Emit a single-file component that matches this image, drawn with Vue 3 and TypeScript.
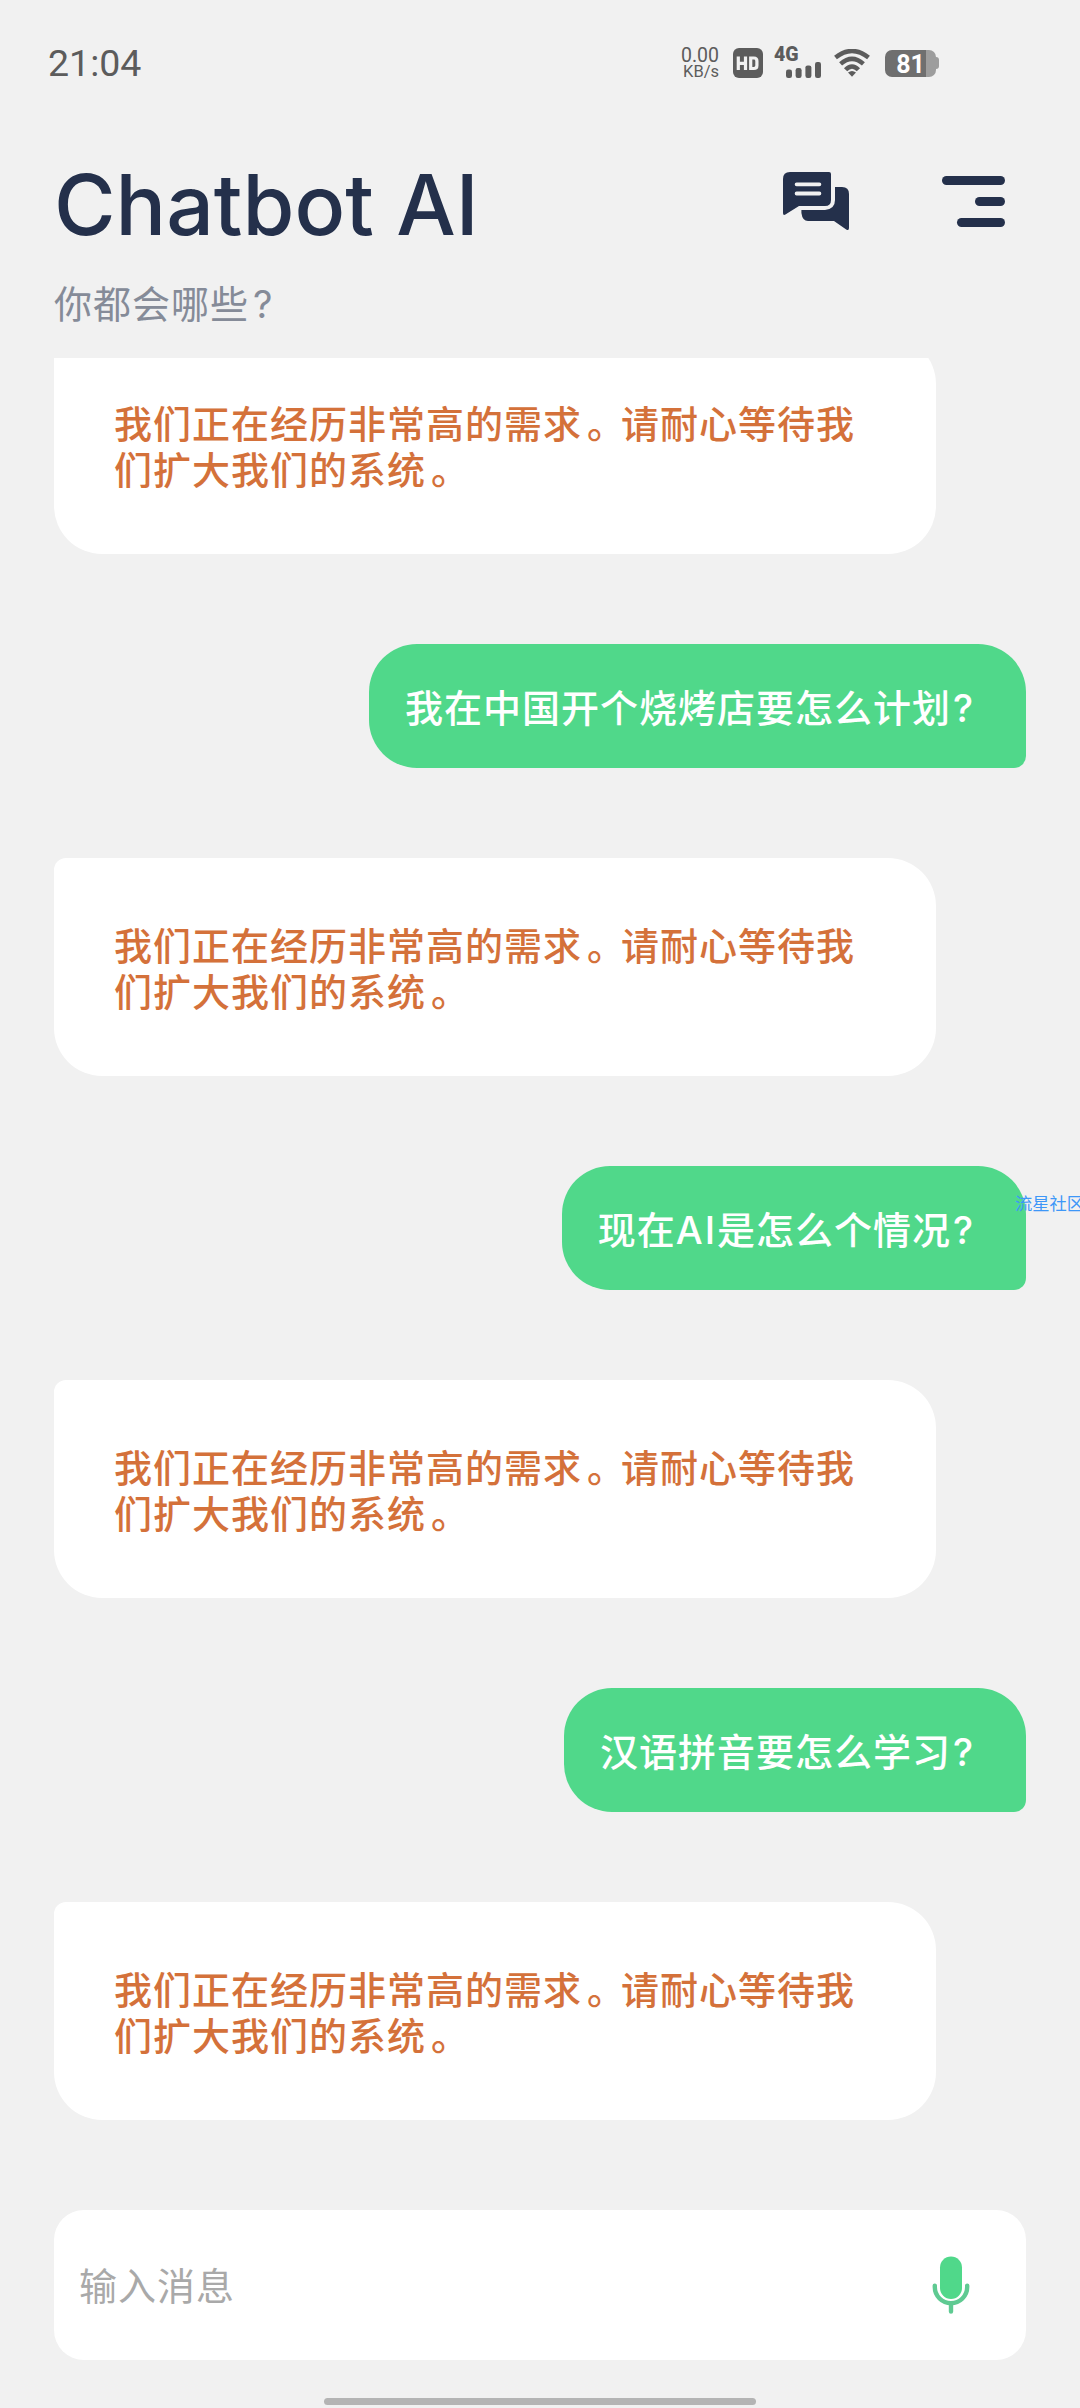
<script setup lang="ts">
interface Message {
  id: number
  from: 'bot' | 'user'
  text: string
}

const busy = '我们正在经历非常高的需求。请耐心等待我们扩大我们的系统。'

const messages: Message[] = [
  { id: 1, from: 'bot', text: busy },
  { id: 2, from: 'user', text: '我在中国开个烧烤店要怎么计划?' },
  { id: 3, from: 'bot', text: busy },
  { id: 4, from: 'user', text: '现在AI是怎么个情况?' },
  { id: 5, from: 'bot', text: busy },
  { id: 6, from: 'user', text: '汉语拼音要怎么学习?' },
  { id: 7, from: 'bot', text: busy },
]

// Punctuation and Latin runs get their own spacing inside CJK text.
function runs(text: string): { text: string; kind: string }[] {
  return text
    .split(/(。|\?|[A-Z]+)/)
    .filter(Boolean)
    .map((t) => ({
      text: t,
      kind: t === '。' ? 'stop' : t === '?' ? 'question' : /^[A-Z]/.test(t) ? 'latin' : 'han',
    }))
}
</script>

<template>
  <div class="screen">
    <div class="status">
      <span class="time">21:04</span>
      <div class="indicators">
        <div class="speed"><span class="rate">0.00</span><span class="unit">KB/s</span></div>
        <svg class="hd" width="30" height="30" viewBox="0 0 30 30">
          <rect width="30" height="30" rx="6" fill="#5c5c5c" />
          <path d="M5.3 8.5v13.5M12.5 8.5v13.5M5.3 15.3h7M17.7 10h3.2q3 0 3 3v4.5q0 3-3 3h-3.2z" fill="none" stroke="#f1f1f1" stroke-width="3.2" />
        </svg>
        <div class="cell">
          <span class="net">4G</span>
          <svg class="bars" width="36" height="16" viewBox="0 0 36 16" fill="#5c5c5c">
            <rect x="0" y="7.5" width="6" height="8.5" rx="2.2" />
            <rect x="9.6" y="6" width="6" height="10" rx="2.2" />
            <rect x="19.4" y="3.4" width="6" height="12.6" rx="2.2" />
            <rect x="29" y="0" width="6" height="16" rx="2.2" />
          </svg>
        </div>
        <svg class="wifi" width="36" height="28" viewBox="0 0 36 28" fill="none" stroke="#5c5c5c" stroke-width="4.5">
          <path d="M1.5 8.6Q18-4.6 34.5 8.6" />
          <path d="M6.6 14.9Q18 5 29.4 14.9" />
          <path d="M11.6 20.8Q18 14 24.4 20.8" />
          <path d="M14 23.6Q18 20.4 22 23.6L18 27.8z" fill="#5c5c5c" stroke="none" />
        </svg>
        <div class="battery"><div class="cellbody">81</div><i class="nub"></i></div>
      </div>
    </div>

    <header class="header">
      <div class="titles">
        <h1>Chatbot AI</h1>
        <p class="sub"><span v-for="(r, i) in runs('你都会哪些?')" :key="i" :class="r.kind">{{ r.text }}</span></p>
      </div>
      <svg class="chat" width="66" height="58" viewBox="0 0 66 58" fill="#24304b">
        <path d="M7 0H46Q48 0 48 2V28Q48 34 42 34H16L2.4 42.6Q0 43.8 0 41V7Q0 0 7 0Z" />
        <path d="M52 15H59Q66 15 66 22V56Q66 59 63.2 57.4L51 49H25Q19.5 49 18.4 41V38H42Q52 37 52 28Z" />
        <path d="M13.6 12.3H36.4M13.6 21.5H36.4" stroke="#f1f1f1" stroke-width="3.8" stroke-linecap="round" />
      </svg>
      <svg class="menu" width="63" height="51" viewBox="0 0 63 51" fill="#24304b">
        <rect width="63" height="9" rx="4.5" />
        <rect x="33" y="21" width="30" height="9" rx="4.5" />
        <rect x="15" y="42" width="48" height="9" rx="4.5" />
      </svg>
    </header>

    <main class="chatlog">
      <div v-for="m in messages" :key="m.id" class="bubble" :class="m.from">
        <span v-for="(r, i) in runs(m.text)" :key="i" :class="r.kind">{{ r.text }}</span>
      </div>
    </main>

    <div class="composer">
      <span class="placeholder">输入消息</span>
      <svg width="38" height="58" viewBox="0 0 38 58">
        <rect x="8" y="0.6" width="22" height="42.4" rx="11" fill="#50d88a" />
        <path d="M2.8 29.6V31A16.2 16.2 0 0 0 35.2 31V29.6M19 47.6V55.6" fill="none" stroke="#5fca92" stroke-width="4.4" stroke-linecap="round" />
      </svg>
    </div>
    <div class="homebar"></div>
    <span class="badge">流星社区</span>
  </div>
</template>

<style>
body {
  margin: 0;
  background: #f1f1f1;
}
</style>

<style scoped>
.screen {
  position: relative;
  display: flex;
  flex-direction: column;
  width: 1080px;
  height: 2408px;
  overflow: hidden;
  background: #f1f1f1;
  font-family: Inter, 'Noto Sans CJK SC', sans-serif;
}
.status {
  display: flex;
  align-items: center;
  justify-content: space-between;
  height: 126px;
  padding: 0 141px 0 48px;
  color: #5c5c5c;
  font-family: Roboto, sans-serif;
}
.time {
  font-size: 37.5px;
}
.indicators {
  display: flex;
  align-items: center;
}
.speed {
  display: flex;
  flex-direction: column;
  align-items: flex-end;
  width: 38px;
  height: 32px;
  margin-right: 14px;
  white-space: nowrap;
}
.rate {
  font-size: 19.5px;
  line-height: 17px;
}
.unit {
  font-size: 16.5px;
  line-height: 16px;
}
.cell {
  display: flex;
  flex-direction: column;
  width: 48px;
  height: 30px;
  margin: 0 12px 0 11px;
}
.net {
  height: 14px;
  font-size: 19.5px;
  font-weight: 900;
  line-height: 14px;
}
.bars {
  margin-left: 12px;
}
.battery {
  display: flex;
  align-items: center;
  margin-left: 15px;
}
.cellbody {
  width: 51px;
  height: 27px;
  border-radius: 7px;
  background: linear-gradient(to right, #6f6f6f 41px, #9d9d9d 41px);
  color: #fff;
  font-size: 25px;
  font-weight: 700;
  line-height: 29px;
  text-align: center;
}
.nub {
  width: 3px;
  height: 12px;
  border-radius: 0 3px 3px 0;
  background: #9d9d9d;
}
.header {
  display: flex;
  align-items: flex-start;
  height: 232px;
  padding: 0 75px 0 54px;
}
.titles {
  flex: 1;
}
h1 {
  margin: 29px 0 0;
  color: #24304b;
  font-size: 84px;
  font-weight: 500;
  line-height: 100px;
}
.sub {
  margin: 26px 0 0;
  color: #858b98;
  font-size: 38px;
  letter-spacing: 1px;
  line-height: 46px;
}
.sub .question {
  text-indent: 4px;
}
.chat {
  margin-top: 46px;
}
.menu {
  margin: 50px 0 0 93px;
}
.chatlog {
  display: flex;
  flex-direction: column;
  justify-content: flex-end;
  gap: 90px;
  height: 1762px;
  padding: 0 54px;
  overflow: hidden;
}
.bubble {
  box-sizing: border-box;
  flex: none;
  font-size: 38px;
  font-weight: 500;
  letter-spacing: 1px;
  line-height: 46.4px;
}
.bot {
  align-self: flex-start;
  width: 882px;
  height: 218px;
  padding: 65px 76px 0 60px;
  border-radius: 12px 48px 48px 48px;
  background: #fff;
  color: #d4713a;
}
.user {
  align-self: flex-end;
  height: 124px;
  padding: 41px 36px 0;
  border-radius: 48px 48px 12px 48px;
  background: #50d88a;
  color: #fff;
  white-space: nowrap;
}
.stop {
  padding: 0 14px 0 5px;
  font-feature-settings: 'halt';
}
.question {
  display: inline-block;
  width: 39px;
  text-indent: 2px;
}
.latin {
  letter-spacing: 2px;
}
.composer {
  display: flex;
  align-items: center;
  justify-content: space-between;
  box-sizing: border-box;
  height: 150px;
  margin: 90px 54px 0;
  padding: 0 56px 0 25px;
  border-radius: 30px;
  background: #fff;
}
.placeholder {
  margin-bottom: 3px;
  color: #a9a9a9;
  font-size: 38px;
  letter-spacing: 1px;
}
.homebar {
  width: 432px;
  height: 7px;
  margin: 38px auto 0;
  border-radius: 4px;
  background: #b4b4b4;
}
.badge {
  position: absolute;
  top: 1191px;
  left: 1015px;
  color: #3d97f8;
  font-size: 17.3px;
  line-height: 25px;
  white-space: nowrap;
}
</style>
